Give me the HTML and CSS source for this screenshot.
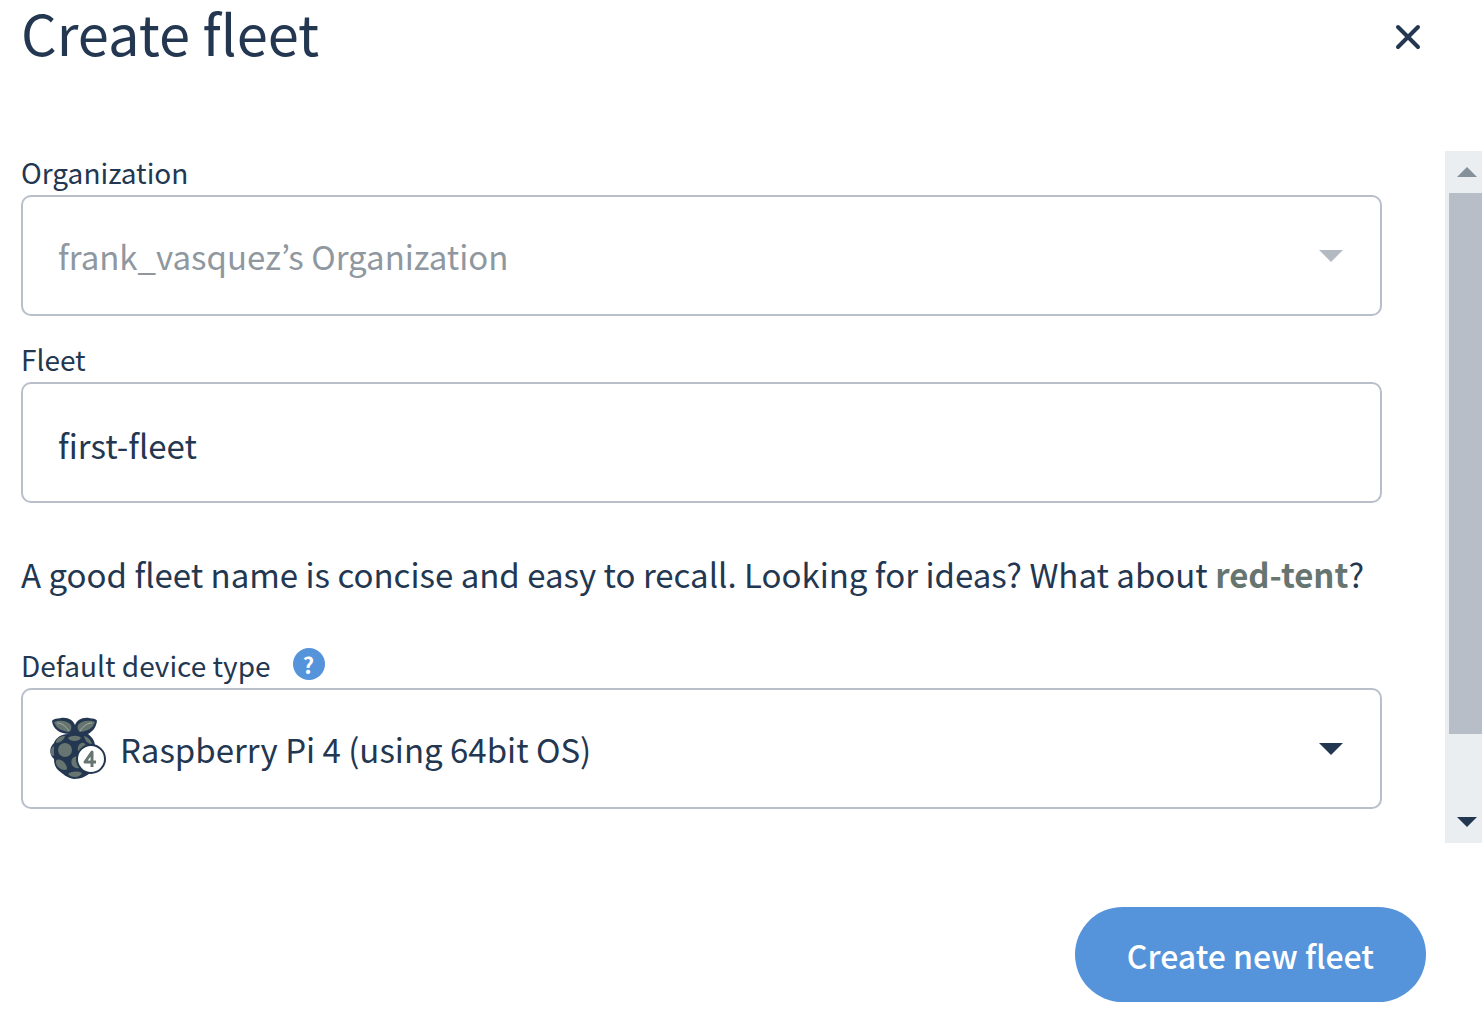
FILE: index.html
```html
<!DOCTYPE html>
<html lang="en">
<head>
<meta charset="utf-8">
<meta name="viewport" content="width=device-width, initial-scale=1">
<title>Create fleet</title>
<link rel="stylesheet" href="styles.css">
</head>
<body>
<main class="dialog">
  <header class="dialog-header">
    <h1 class="title">Create fleet</h1>
    <button class="close" type="button" aria-label="Close">
      <svg width="26" height="26" viewBox="0 0 26 26" aria-hidden="true"><path d="M3 3L23 23M23 3L3 23" fill="none" stroke="currentColor" stroke-width="4" stroke-linecap="round"/></svg>
    </button>
  </header>

  <div class="scroll-area">
    <form class="form" id="fleet-form">
      <div class="group">
        <label class="label" for="organization">Organization</label>
        <div class="field field-disabled">
          <select class="control" id="organization" disabled>
            <option>frank_vasquez’s Organization</option>
          </select>
          <svg class="caret" width="24" height="12" viewBox="0 0 24 12" aria-hidden="true"><path d="M0 0H24L12 12Z" fill="currentColor"/></svg>
        </div>
      </div>

      <div class="group">
        <label class="label" for="fleet">Fleet</label>
        <div class="field field-text">
          <input class="control" id="fleet" type="text" value="first-fleet">
        </div>
      </div>

      <p class="hint">A good fleet name is concise and easy to recall. Looking for ideas? What about <a class="suggestion" href="#fleet">red-tent</a>?</p>

      <div class="group">
        <div class="label-row">
          <label class="label" for="device">Default device type</label>
          <button class="help" type="button" aria-label="About device types">?</button>
        </div>
        <div class="field field-device">
          <svg class="device-icon" width="58" height="64" viewBox="0 0 58 64" aria-hidden="true">
            <path d="M24 17C11 18 4 12 3 4C5 1 9 2 12 1C19 0 24 3 26 8C28 3 33 0 40 1C43 2 47 1 48 4C47 11 43 15 39 17C43 20 46 24 46 29L50 38V50L42 56C36 59 33 62 25 62C18 61 14 57 9 53C6 50 5 46 5 42C0 38 0 30 5 26C7 20 14 16 24 17Z" fill="#233751"/>
            <g fill="#66756f">
              <path d="M5 5C10 3 18 3 22 8C23 11 22 14 20 15C12 14 7 11 5 5Z"/>
              <path d="M46 5C41 3 33 3 29 8C28 11 29 14 31 15C39 14 44 11 46 5Z"/>
              <path d="M7 26C7 21 11 19 16 19C15 23 11 26 7 26Z"/>
              <path d="M19 21C22 18 30 18 32 21C30 25 21 25 19 21Z"/>
              <path d="M35 19C39 20 42 23 43 27C39 27 36 24 35 19Z"/>
              <ellipse cx="16" cy="33" rx="7" ry="7"/>
              <path d="M29 34C28 29 31 25 35 26C39 29 37 32 33 37Z"/>
              <path d="M2 37C1 33 3 30 5 29V39C3 39 2 38 2 37Z"/>
              <path d="M30 40C24 38 21 43 23 48C26 53 31 51 33 50Z"/>
              <path d="M7 44C9 40 18 45 18 52C16 55 6 51 7 44Z"/>
              <path d="M19 57C23 54 29 54 33 56C31 61 22 61 19 57Z"/>
            </g>
            <path d="M8 6C12 6 16 8 20 14M43 6C39 6 35 8 31 14" fill="none" stroke="#a3aba8" stroke-width="1"/>
            <circle cx="42" cy="42" r="14" fill="#fff" stroke="#233751" stroke-width="2"/>
            <path d="M43 50V35L36 45H47" fill="none" stroke="#66756f" stroke-width="3" stroke-linejoin="round"/>
          </svg>
          <select class="control" id="device">
            <option>Raspberry Pi 4 (using 64bit OS)</option>
          </select>
          <svg class="caret" width="24" height="12" viewBox="0 0 24 12" aria-hidden="true"><path d="M0 0H24L12 12Z" fill="currentColor"/></svg>
        </div>
      </div>
    </form>

    <div class="scrollbar">
      <button class="scroll-button scroll-up" type="button" aria-label="Scroll up">
        <svg width="20" height="10" viewBox="0 0 20 10" aria-hidden="true"><path d="M0 10H20L10 0Z" fill="currentColor"/></svg>
      </button>
      <div class="track"><div class="thumb"></div></div>
      <button class="scroll-button" type="button" aria-label="Scroll down">
        <svg width="20" height="10" viewBox="0 0 20 10" aria-hidden="true"><path d="M0 0H20L10 10Z" fill="currentColor"/></svg>
      </button>
    </div>
  </div>

  <footer class="dialog-footer">
    <button class="submit" type="submit" form="fleet-form">Create new fleet</button>
  </footer>
</main>
</body>
</html>
```
FILE: styles.css
```css
* {
  box-sizing: border-box;
}

body {
  margin: 0;
  background: #fff;
  color: #233751;
  font-family: "Noto Sans CJK KR", "Noto Sans", sans-serif;
  font-size: 33px;
}

button,
input,
select {
  margin: 0;
  padding: 0;
  border: 0;
  font: inherit;
  color: inherit;
  background: none;
}

button {
  cursor: pointer;
}

.dialog-header {
  display: flex;
  justify-content: space-between;
  align-items: flex-start;
  padding: 0 56px 77px 21px;
}

.title {
  margin: 0;
  font-size: 56px;
  font-weight: 400;
  line-height: 64px;
}

.close {
  display: flex;
  align-items: center;
  justify-content: center;
  width: 36px;
  height: 74px;
}

.scroll-area {
  display: flex;
}

.form {
  flex: 1;
  min-width: 0;
  padding: 0 63px 34px 21px;
}

.group + .group {
  margin-top: 22px;
}

.label-row {
  display: flex;
  align-items: center;
  gap: 22px;
}

.label {
  display: block;
  padding-bottom: 2px;
  font-size: 28px;
  line-height: 42px;
}

.help {
  width: 32px;
  height: 32px;
  margin-bottom: 4px;
  border-radius: 50%;
  background: #5594da;
  color: #fff;
  font-size: 22px;
  font-weight: 700;
  line-height: 32px;
}

.field {
  display: flex;
  align-items: center;
  height: 121px;
  padding: 0 37px 0 35px;
  border: 2px solid #b8bfca;
  border-radius: 10px;
}

.field-text {
  padding-top: 4px;
}

.field-device {
  padding-left: 26px;
}

.field-disabled {
  color: #8f979f;
}

.field-disabled .caret {
  color: #b4bac2;
}

.control {
  flex: 1;
  min-width: 0;
  height: 60px;
  line-height: 60px;
  appearance: none;
  outline: 0;
}

.control:disabled {
  opacity: 1;
}

.caret {
  flex: none;
  pointer-events: none;
}

.device-icon {
  flex: none;
  margin-right: 13px;
}

.hint {
  margin: 46px 0 45px;
  line-height: 50px;
}

.suggestion {
  color: #66756f;
  font-weight: 700;
  text-decoration: none;
}

.scrollbar {
  display: flex;
  flex-direction: column;
  width: 37px;
  background: #ebeef1;
}

.scroll-button {
  display: flex;
  align-items: center;
  justify-content: center;
  height: 42px;
  padding-left: 7px;
}

.scroll-up {
  color: #84909a;
}

.track {
  flex: 1;
  padding-left: 4px;
}

.thumb {
  height: 89%;
  background: #b8bec7;
}

.dialog-footer {
  display: flex;
  justify-content: flex-end;
  padding: 64px 56px 24px;
}

.submit {
  height: 95px;
  padding: 0 52px;
  border-radius: 48px;
  background: #5594da;
  color: #fff;
  font-size: 32px;
  font-weight: 500;
}
```
